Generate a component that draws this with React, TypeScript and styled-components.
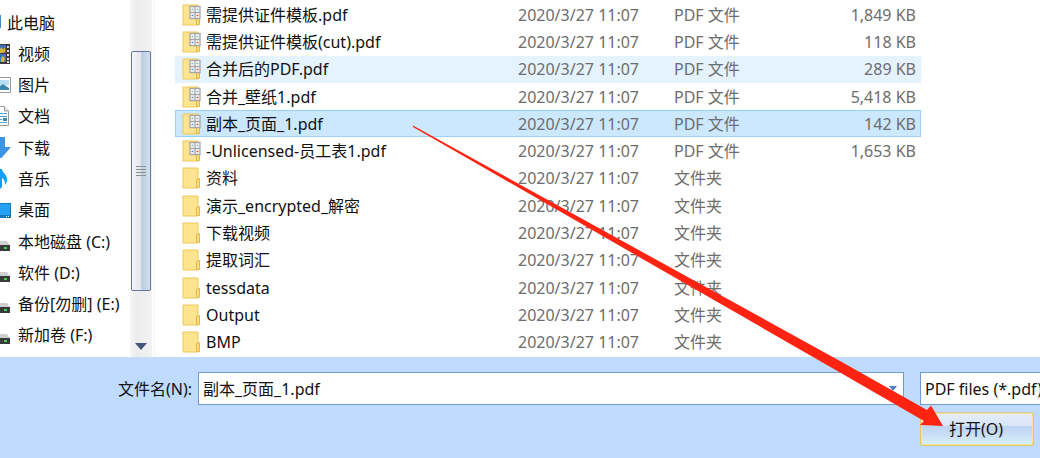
import React from "react";
import styled, { createGlobalStyle, css } from "styled-components";

const font = `"Noto Sans", "Noto Sans CJK SC", sans-serif`;

const GlobalStyle = createGlobalStyle`
  * { box-sizing: border-box; }
  html, body { margin: 0; }
  body { background: #bfdbff; font: 16px/24px ${font}; color: #111; overflow-x: hidden; }
  input, select, button { font: inherit; color: inherit; }
`;

const Dialog = styled.main`
  position: relative;
  min-height: 100vh;
  overflow: hidden;
`;

const Browser = styled.div`
  display: flex;
  background: #fff;
`;

const Places = styled.nav`
  width: 130px;
  flex: none;
  display: grid;
  grid-auto-rows: 1fr;
  padding: 7px 0 6px;
`;

const Place = styled.a<{ $root?: boolean }>`
  display: flex;
  align-items: center;
  gap: 6px;
  color: inherit;
  text-decoration: none;
  white-space: nowrap;
  svg { flex: none; width: ${(p) => (p.$root ? 1 : 12)}px; height: 22px; }
`;

const Track = styled.div`
  width: 22px;
  flex: none;
  display: flex;
  flex-direction: column;
  align-items: center;
  padding: 51px 0 7px;
  background: linear-gradient(90deg, #f7f7f7, #ececec 30%, #f2f2f2);
`;

const Thumb = styled.div`
  width: 20px;
  height: 240px;
  display: flex;
  align-items: center;
  justify-content: center;
  border: 1px solid #6177a4;
  border-radius: 2px;
  background: linear-gradient(90deg, #f4f5f8, #e3e6ec 48%, #bccde0 54%, #d3e0ee);
`;

const DownArrow = styled.svg`
  width: 12px;
  height: 7px;
  margin-top: auto;
`;

const Files = styled.div`
  flex: 1;
  min-width: 0;
  margin-left: 2px;
  border-left: 1px solid #f4f4f4;
  padding: 1px 119px 1px 20px;
`;

const FileTable = styled.table`
  width: 100%;
  height: 355px;
  table-layout: fixed;
  border-collapse: collapse;
  color: #6d6d6d;
`;

const FileRow = styled.tr<{ $state?: "hover" | "selected" }>`
  ${(p) => p.$state === "hover" && css`background: #e5f3ff;`}
  ${(p) => p.$state === "selected" && css`
    background: #cce8ff;
    box-shadow: inset 0 0 0 1px #99d1ff;
  `}
`;

const Cell = styled.td<{ $right?: boolean }>`
  padding: 0 ${(p) => (p.$right ? 5 : 0)}px 0 0;
  text-align: ${(p) => (p.$right ? "right" : "left")};
  white-space: nowrap;
`;

const FileName = styled.div`
  display: flex;
  align-items: center;
  gap: 5px;
  padding-left: 7px;
  color: #111;
  svg { flex: none; width: 19px; height: 22px; }
`;

const Footer = styled.form`
  display: grid;
  grid-template-columns: 192px 1fr 120px;
  align-items: center;
  row-gap: 7px;
  padding: 15px 0 12px;
`;

const NameLabel = styled.label`
  text-align: right;
`;

const Combo = styled.div`
  display: flex;
  align-items: center;
  height: 33px;
  margin: 0 16px 0 6px;
  border: 1px solid #7399d1;
  background: #fff;
`;

const NameInput = styled.input`
  flex: 1;
  min-width: 0;
  height: 24px;
  padding: 0 4px;
  border: 0;
  outline: 0;
  background: none;
`;

const DropButton = styled.button`
  width: 20px;
  height: 24px;
  padding: 0;
  display: grid;
  place-items: center;
  border: 0;
  background: none;
`;

const TypeSelect = styled.select`
  appearance: none;
  width: 100%;
  height: 33px;
  padding: 0 0 0 4px;
  border: 1px solid #7399d1;
  border-right: 0;
  border-radius: 0;
  background: #fff;
  outline: 0;
`;

const OpenButton = styled.button`
  grid-column: 3;
  width: 114px;
  height: 34px;
  padding: 0 2px 0 0;
  border: 1px solid #e3c766;
  border-top-color: #d3cba6;
  border-radius: 3px;
  box-shadow: inset 0 0 0 1px #f4e3a0;
  background: linear-gradient(#e6eefa, #d8e6f8 40%, #bdd3f2 42%, #d9eefc);
`;

const Pointer = styled.svg`
  position: absolute;
  top: 0;
  right: 90px;
  width: 540px;
  height: 440px;
  pointer-events: none;
`;

type PlaceKind = "pc" | "video" | "image" | "doc" | "down" | "music" | "desk" | "disk";

const placeArt: Record<PlaceKind, React.ReactNode> = {
  pc: <rect y="3" width="1" height="13" fill="#3f8fc4" />,
  video: (
    <>
      <path d="M0 1h10v20H0z" fill="#3c3c3c" />
      <path d="M0 2h6v8H0zM0 11h6v8H0z" fill="#3f6fc0" />
      <path d="M0 6l2-2 1 3 2-3v5l-3 1H0zM1 15l2-2 2 2-1 4H1z" fill="#d7b634" />
      <path d="M7 3h2v2H7zM7 7h2v2H7zM7 11h2v2H7zM7 15h2v2H7zM7 18h2v2H7z" fill="#dedede" />
    </>
  ),
  image: (
    <>
      <path d="M0 3.500h10.500v15H0" fill="#fff" stroke="#9b9b9b" />
      <path d="M0 6h9v5H0z" fill="#b8def6" />
      <path d="M0 12l3-2 6 4v2H0z" fill="#3f86ad" />
    </>
  ),
  doc: (
    <>
      <path d="M0 1.500h4l4.500 4.500v14.500H0" fill="#fff" stroke="#9b9b9b" />
      <path d="M4.500 1.500V6h4" fill="#e8e8e8" stroke="#9b9b9b" />
      <path d="M0 8.500h7M0 11.500h7M0 14.500h2M0 17.500h7" stroke="#4aa3df" />
      <path d="M3 13h4v3H3z" fill="#3f86ad" />
    </>
  ),
  down: <path d="M0 0h5v10h6L1.500 21H0z" fill="#3d94e4" />,
  music: <path d="M0 1h2c0 4 5 5 5 10 0 3-1 5-2 6 0-4-1-6-3-7v9l-2 2z" fill="#12a0f5" />,
  desk: (
    <>
      <path d="M0 4h11v15H0z" fill="#1478bd" />
      <path d="M0 5h10v11H0z" fill="#23a2f3" />
      <path d="M6 17.500h1M8 17.500h1" stroke="#fff" />
    </>
  ),
  disk: (
    <>
      <path d="M0 10h7l3 4H0z" fill="#cfcfcf" />
      <path d="M0 14h10v6H0z" fill="#3a3a3a" />
      <path d="M4 17h3" stroke="#3fd04a" strokeWidth="2" />
    </>
  ),
};

const places: [PlaceKind, string][] = [
  ["pc", "此电脑"],
  ["video", "视频"],
  ["image", "图片"],
  ["doc", "文档"],
  ["down", "下载"],
  ["music", "音乐"],
  ["desk", "桌面"],
  ["disk", "本地磁盘 (C:)"],
  ["disk", "软件 (D:)"],
  ["disk", "备份[勿删] (E:)"],
  ["disk", "新加卷 (F:)"],
];

type FileItem = { name: string; size?: string; state?: "hover" | "selected" };

const files: FileItem[] = [
  { name: "需提供证件模板.pdf", size: "1,849 KB" },
  { name: "需提供证件模板(cut).pdf", size: "118 KB" },
  { name: "合并后的PDF.pdf", size: "289 KB", state: "hover" },
  { name: "合并_壁纸1.pdf", size: "5,418 KB" },
  { name: "副本_页面_1.pdf", size: "142 KB", state: "selected" },
  { name: "-Unlicensed-员工表1.pdf", size: "1,653 KB" },
  { name: "资料" },
  { name: "演示_encrypted_解密" },
  { name: "下载视频" },
  { name: "提取词汇" },
  { name: "tessdata" },
  { name: "Output" },
  { name: "BMP" },
];

const FolderIcon = ({ pdf }: { pdf: boolean }) => (
  <svg viewBox="0 0 19 22" aria-hidden="true">
    <path d="M1 1h15v20H1z" fill="#ffe48f" stroke="#edc85a" />
    <path d="M14.500 12.500l3-1v9h-3z" fill="#fbdc7c" stroke="#e3b945" />
    {pdf && (
      <>
        <path
          d="M8 2.500h10v12H8zM13 2.500v12M8 8.500h10"
          fill="#fff"
          stroke="#a6a6a6"
          strokeWidth="1.300"
        />
        <path d="M14.500 5.500h2M9.500 5.500h2" stroke="#8fb1c9" strokeWidth="1.500" />
        <path d="M9.500 11.500h2" stroke="#4f8ee0" strokeWidth="1.500" />
        <path d="M14.500 11.500h2" stroke="#e0553f" strokeWidth="1.500" />
      </>
    )}
  </svg>
);

export default function App() {
  return (
    <>
      <GlobalStyle />
      <Dialog>
        <Browser>
          <Places>
            {places.map(([kind, label]) => (
              <Place key={label} href="#" $root={kind === "pc"}>
                <svg aria-hidden="true">{placeArt[kind]}</svg>
                {label}
              </Place>
            ))}
          </Places>
          <Track>
            <Thumb>
              <svg width="10" height="10" aria-hidden="true">
                <path d="M0 .5h10M0 3.500h10M0 6.500h10M0 9.500h10" stroke="#8c8f96" />
              </svg>
            </Thumb>
            <DownArrow aria-hidden="true">
              <path d="M0 0h12L6 7z" fill="#43557d" />
            </DownArrow>
          </Track>
          <Files>
            <FileTable>
              <colgroup>
                <col />
                <col width="156" />
                <col width="150" />
                <col width="97" />
              </colgroup>
              <tbody>
                {files.map((f) => (
                  <FileRow key={f.name} $state={f.state}>
                    <Cell>
                      <FileName>
                        <FolderIcon pdf={!!f.size} />
                        {f.name}
                      </FileName>
                    </Cell>
                    <Cell>2020/3/27 11:07</Cell>
                    <Cell>{f.size ? "PDF 文件" : "文件夹"}</Cell>
                    <Cell $right>{f.size}</Cell>
                  </FileRow>
                ))}
              </tbody>
            </FileTable>
          </Files>
        </Browser>
        <Footer onSubmit={(e) => e.preventDefault()}>
          <NameLabel htmlFor="file-name">文件名(N):</NameLabel>
          <Combo>
            <NameInput id="file-name" defaultValue="副本_页面_1.pdf" />
            <DropButton type="button" aria-label="文件名列表">
              <svg width="8" height="5" aria-hidden="true">
                <path d="M0 0h8L4 5z" fill="#4a7ec8" />
              </svg>
            </DropButton>
          </Combo>
          <TypeSelect aria-label="文件类型">
            <option>PDF files (*.pdf)</option>
          </TypeSelect>
          <OpenButton type="submit">打开(O)</OpenButton>
        </Footer>
        <Pointer viewBox="410 0 540 440" aria-hidden="true">
          <path
            d="M413 125.500L840 361 927 410 931 405.500 943 426 920 425 924 421 840 372.500 413 127z"
            fill="#ff2412"
          />
        </Pointer>
      </Dialog>
    </>
  );
}
